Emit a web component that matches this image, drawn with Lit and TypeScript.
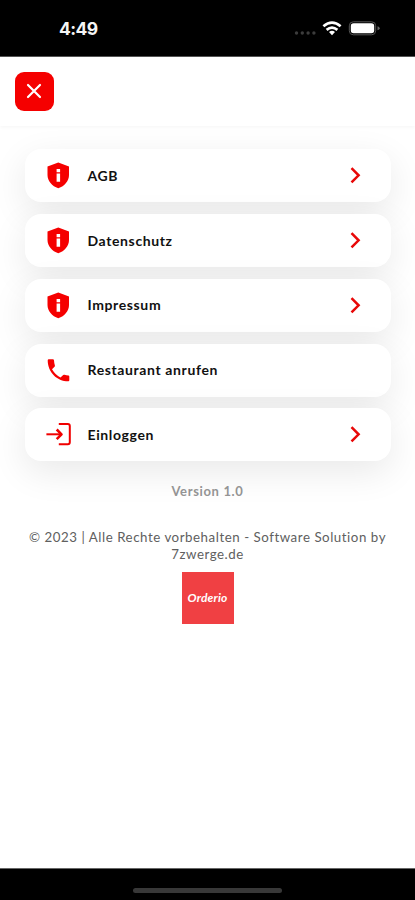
import { LitElement, html, css, svg } from "lit";
import { customElement } from "lit/decorators.js";

const shield = svg`<path fill="#f50000" fill-rule="evenodd" d="M12.300 .6 1.500 4.600V13c0 6 4.500 11.200 10.800 13.200C18.600 24.200 23 19 23 13V4.600ZM10.600 7.100h3.500v3.100h-3.500ZM10.600 11.600h3.500v8.200h-3.500Z"/>`;
const phone = svg`<path fill="#f50000" d="M2.800 2.300H6.800Q7.900 2.300 8 3.300Q8.100 6 8.900 8.400Q9.100 9.200 8.500 9.700L6 12.200Q9.300 17.800 14.500 20.600L17.200 17.900Q17.700 17.500 18.500 17.700Q20.400 18.300 22.400 18.400Q23.300 18.500 23.300 19.400V23.300Q23.300 24.300 22.300 24.300C10.800 24.100 1.900 15.200 1.700 3.400Q1.700 2.300 2.800 2.300Z"/>`;
const login = svg`<g fill="none" stroke="#f00000" stroke-linejoin="round"><path stroke-width="2" d="M12.800 3.100H21.800Q23.800 3.100 23.800 5.100V21.300Q23.800 23.300 21.800 23.300H12.800"/><path stroke-width="2" d="M.4 13.300H15"/><path stroke-width="2.600" d="M10.700 8.500 15.500 13.300 10.700 18.100"/></g>`;

const entries = [
  { label: "AGB", icon: shield, arrow: true },
  { label: "Datenschutz", icon: shield, arrow: true },
  { label: "Impressum", icon: shield, arrow: true },
  { label: "Restaurant anrufen", icon: phone, arrow: false },
  { label: "Einloggen", icon: login, arrow: true },
];

@customElement("app-root")
export class AppRoot extends LitElement {
  static styles = css`
    :host {
      display: flex;
      flex-direction: column;
      width: 415px;
      height: 900px;
      overflow: hidden;
      background: #fff;
      font-family: Lato, sans-serif;
    }
    * { box-sizing: border-box; }
    svg { display: block; flex: none; overflow: visible; }
    .status {
      flex: none;
      height: 57px;
      background: #000;
      border-bottom: 1px solid #555;
      display: flex;
      justify-content: space-between;
      padding: 17px 34px 0 59px;
      color: #f5f5f5;
      font: 700 17.500px/24px Inter, sans-serif;
      letter-spacing: -0.6px;
    }
    .indicators { height: 24px; }
    .header {
      flex: none;
      height: 69px;
      padding: 15px 15px 0;
      box-shadow: 0 1px 4px rgba(0, 0, 0, 0.045);
    }
    .close {
      width: 39px;
      height: 38.500px;
      border: 0;
      padding: 0;
      border-radius: 9px;
      background: #f50000;
      display: grid;
      place-items: center;
    }
    .close svg { margin: 0 1px 1px 0; }
    .list {
      display: flex;
      flex-direction: column;
      gap: 11.750px;
      padding: 23.400px 24px 0 25px;
    }
    .card {
      height: 53px;
      flex: none;
      display: flex;
      align-items: center;
      padding: 0 30px 0 21px;
      border-radius: 16px;
      background: #fff;
      box-shadow: 0 11px 36px rgba(0, 0, 0, 0.09);
    }
    .label {
      flex: 1;
      margin-left: 16.500px;
      color: #111;
      font-size: 14px;
      font-weight: 700;
      line-height: 20px;
      letter-spacing: 0.62px;
    }
    .version {
      margin-top: 20px;
      text-align: center;
      color: #949494;
      font-size: 13px;
      font-weight: 700;
      line-height: 20px;
      letter-spacing: 0.65px;
    }
    .legal {
      margin-top: 28px;
      text-align: center;
      color: #606060;
      font-size: 13.300px;
      line-height: 16.500px;
      letter-spacing: 0.54px;
      white-space: nowrap;
    }
    .logo {
      flex: none;
      align-self: center;
      width: 52px;
      height: 52px;
      margin-top: 9.500px;
      background: #f04043;
      display: grid;
      place-items: center;
      color: #fff;
      font: italic 700 12px/16px Lato, cursive;
      letter-spacing: 0.15px;
      padding-top: 1px;
    }
    .spacer { flex: 1; }
    .bottom {
      flex: none;
      height: 32px;
      background: #000;
      border-top: 1px solid #666;
      display: flex;
      justify-content: center;
      padding-top: 19px;
    }
    .handle { width: 149px; height: 5px; border-radius: 3px; background: #383838; }
  `;

  render() {
    return html`
      <div class="status">
        <span>4:49</span>
        <svg class="indicators" width="86" height="24" viewBox="0 0 86 24">
          <g fill="#3c3c3c"><circle cx="1.500" cy="16" r="1.700"/><circle cx="7.300" cy="16" r="1.700"/><circle cx="13.100" cy="16" r="1.700"/><circle cx="18.900" cy="16" r="1.700"/></g>
          <g fill="none" stroke="#fff" stroke-width="2.700"><path d="M28.400 9.300Q37 1.900 45.600 9.300"/><path d="M31.600 12.900Q37 8.400 42.400 12.900"/></g>
          <path fill="#fff" d="M34 15Q37 12.600 40 15L37 18.200Z"/>
          <rect x="54.300" y="4.800" width="26.400" height="13" rx="4" fill="none" stroke="#555" stroke-width="1"/>
          <rect x="55.800" y="6.300" width="23.400" height="10" rx="2.800" fill="#fff"/>
          <path d="M82.500 9.300Q84.700 9.800 84.700 11.300T82.500 13.300Z" fill="#666"/>
        </svg>
      </div>
      <div class="header">
        <button class="close" aria-label="Schließen">
          <svg width="16" height="16" viewBox="0 0 16 16"><path d="M2 2 14 14M14 2 2 14" stroke="#fff" stroke-width="2.200" stroke-linecap="round"/></svg>
        </button>
      </div>
      <div class="list">
        ${entries.map(
          (e) => html`<div class="card">
            <svg width="25" height="27" viewBox="0 0 25 27">${e.icon}</svg>
            <span class="label">${e.label}</span>
            ${e.arrow
              ? html`<svg width="11" height="17" viewBox="0 0 11 17"><path d="M1.500 1.200 8.600 8.300 1.500 15.400" fill="none" stroke="#e80808" stroke-width="2.500"/></svg>`
              : ""}
          </div>`
        )}
      </div>
      <div class="version">Version 1.0</div>
      <div class="legal">© 2023 | Alle Rechte vorbehalten - Software Solution by<br />7zwerge.de</div>
      <div class="logo">Orderio</div>
      <div class="spacer"></div>
      <div class="bottom"><div class="handle"></div></div>
    `;
  }
}
